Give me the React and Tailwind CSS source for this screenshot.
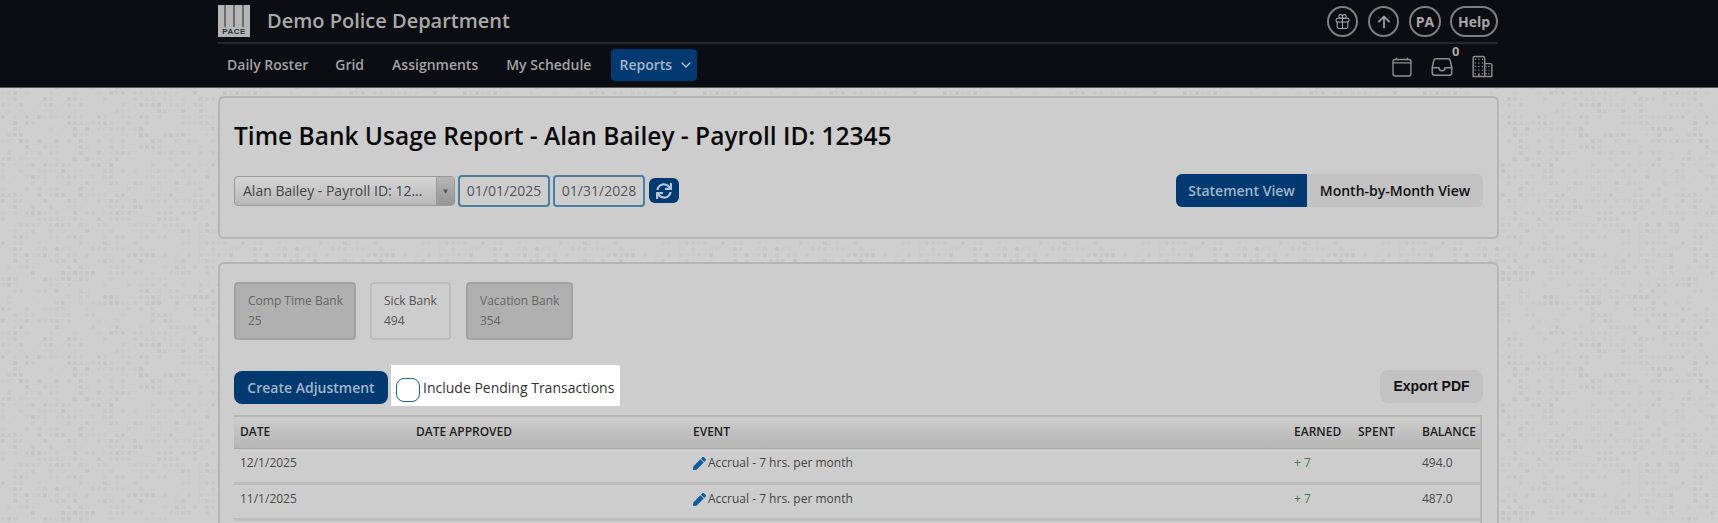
import React from "react";
import { IoGiftOutline, IoArrowUpOutline, IoCalendarClearOutline, IoFileTrayOutline, IoBusinessOutline, IoChevronDown } from "react-icons/io5";
import { FaSync, FaPen } from "react-icons/fa";

const font = "font-['Open_Sans',sans-serif]";

function makeTexture() {
  let seed = 7;
  const rnd = () => {
    seed = (seed * 16807) % 2147483647;
    return seed / 2147483647;
  };
  let rects = "";
  for (let y = 0; y < 40; y++) {
    for (let x = 0; x < 40; x++) {
      const r = rnd();
      if (r < 0.5) {
        const op = r < 0.1 ? 0.55 : r < 0.3 ? 0.35 : 0.2;
        rects += `<rect x='${x * 6 + 1}' y='${y * 6 + 1}' width='4' height='4' rx='1' fill='%23bdbdbd' opacity='${op}'/>`;
      }
    }
  }
  return `url("data:image/svg+xml,<svg xmlns='http://www.w3.org/2000/svg' width='240' height='240'>${rects}</svg>")`;
}
const texture = makeTexture();

function Logo() {
  return (
    <div className="w-8 h-8 bg-[#b5b5b5] flex flex-col justify-end relative overflow-hidden">
      <div className="flex-1 flex justify-between px-[6px]">
        <div className="w-[2px] bg-[#6c6c6c]" />
        <div className="w-[2px] bg-[#6c6c6c]" />
        <div className="w-[2px] bg-[#6c6c6c]" />
      </div>
      <div className="h-[10px] leading-[10px] text-[8px] font-bold text-[#333] text-center tracking-[0.5px] font-['Liberation_Sans',sans-serif]">PACE</div>
    </div>
  );
}

function Circle({ children, className = "" }) {
  return (
    <div className={`h-[31px] rounded-full border-2 border-[#7f7f7f] flex items-center justify-center text-[#a8a8a8] text-sm font-bold ${className}`}>
      {children}
    </div>
  );
}

function Bank({ label, value, active, className = "" }) {
  return (
    <div className={`h-[58px] rounded-[4px] border-2 pl-[12px] pt-[7px] text-[12px] leading-[20px] whitespace-nowrap ${active ? "border-[#bdbdbd] bg-[#cdcdcd] text-[#555]" : "border-[#a3a3a3] bg-[#b0b0b0] text-[#666]"} ${className}`}>
      <div>{label}</div>
      <div>{value}</div>
    </div>
  );
}

const cols = "grid grid-cols-[176px_277px_601px_64px_64px_1fr]";

function Row({ date, balance }) {
  return (
    <div className={`${cols} h-[36px] pl-[6px] pt-[5px] border-b-[3px] border-[#bdbdbd] text-[12px] leading-[18px] text-[#4a4a4a]`}>
      <div>{date}</div>
      <div />
      <div className="flex items-center gap-[2px] h-[18px]">
        <FaPen className="text-[#0d5c9e] w-[13px] h-[13px]" />
        <span className="text-[#444]">Accrual - 7 hrs. per month</span>
      </div>
      <div className="text-[#3f7d4f]">+ 7</div>
      <div />
      <div>{balance}</div>
    </div>
  );
}

export default function App() {
  return (
    <div className={`${font} h-[523px] overflow-hidden bg-[#cfcfcf]`} style={{ backgroundImage: texture }}>
      <header className="h-[88px] bg-[#0c0d12] border-b border-[#5a5a5a]">
        <div className="w-[1280px] ml-[218px]">
          <div className="h-[44px] flex items-start justify-between border-b-2 border-[#27282c] pt-[5px]">
            <div className="flex items-center">
              <Logo />
              <span className="ml-[17px] text-[20px] leading-[32px] font-semibold text-[#a9a9a9]">Demo Police Department</span>
            </div>
            <div className="flex items-center gap-[9px] pt-[1px]">
              <Circle className="w-[31px] text-[18px]"><IoGiftOutline className="w-[17px] h-[17px]" /></Circle>
              <Circle className="w-[31px] text-[18px] ml-[1px]"><IoArrowUpOutline className="w-[18px] h-[18px]" /></Circle>
              <Circle className="w-[32px] ml-[1px]">PA</Circle>
              <Circle className="w-[48px]">Help</Circle>
            </div>
          </div>
          <div className="h-[41px] flex items-center justify-between">
            <nav className="flex items-center pl-[9px] text-[14px] font-semibold text-[#a3a3a3]">
              <span>Daily Roster</span>
              <span className="ml-[27px]">Grid</span>
              <span className="ml-[28px]">Assignments</span>
              <span className="ml-[28px]">My Schedule</span>
              <span className="ml-[20px] h-[32px] w-[86px] rounded-[4px] bg-[#013a71] text-[#a3b5c7] flex items-center pl-[8px] gap-[7px]">
                Reports <IoChevronDown className="w-[14px] h-[14px] text-[#b8c5d2]" />
              </span>
            </nav>
            <div className="flex items-center gap-[17px] pr-[4px] pt-[4px] text-[#8f8f8f]">
              <IoCalendarClearOutline className="w-[22px] h-[22px]" />
              <div className="relative">
                <IoFileTrayOutline className="w-[24px] h-[24px]" />
                <span className="absolute -top-[13px] left-[22px] text-[13px] font-bold text-[#a8a8a8]">0</span>
              </div>
              <IoBusinessOutline className="w-[23px] h-[23px]" />
            </div>
          </div>
        </div>
      </header>

      <main className="w-[1281px] ml-[218px]">
        <section className="mt-[8px] h-[143px] rounded-[6px] border-2 border-[#b5b5b5] bg-[#cdcdcd] px-[14px] pt-[21px]">
          <h1 className="text-[24.5px] leading-[33px] font-semibold text-[#0a0a0a]">Time Bank Usage Report - Alan Bailey - Payroll ID: 12345</h1>
          <div className="mt-[22px] flex items-center justify-between">
            <div className="flex items-center">
              <div className="w-[221px] h-[30px] rounded-[4px] border border-[#9a9a9a] bg-gradient-to-b from-[#d6d6d6] to-[#b8b8b8] flex items-center text-[14px] text-[#444]">
                <span className="flex-1 pl-[8px] whitespace-nowrap">Alan Bailey - Payroll ID: 12...</span>
                <span className="w-[18px] h-full border-l border-[#9a9a9a] bg-gradient-to-b from-[#b5b5b5] to-[#969696] flex items-center justify-center text-[#555] text-[8px] rounded-r-[3px]">▼</span>
              </div>
              <div className="ml-[3px] w-[92px] h-[32px] rounded-[4px] border-2 border-[#4b7f9f] flex items-center justify-center text-[14px] text-[#555]">01/01/2025</div>
              <div className="ml-[3px] w-[92px] h-[32px] rounded-[4px] border-2 border-[#4b7f9f] flex items-center justify-center text-[14px] text-[#555]">01/31/2028</div>
              <div className="ml-[4px] w-[30px] h-[25px] rounded-[6px] bg-[#013a71] flex items-center justify-center">
                <FaSync className="w-[16px] h-[16px] text-[#b3c4d4]" />
              </div>
            </div>
            <div className="flex h-[33px] rounded-[6px] bg-[#c2c2c2] text-[14px] font-semibold">
              <span className="w-[131px] rounded-l-[6px] bg-[#013a71] text-[#a3b5c7] flex items-center justify-center">Statement View</span>
              <span className="w-[176px] flex items-center justify-center text-[#111]">Month-by-Month View</span>
            </div>
          </div>
        </section>

        <section className="mt-[23px] h-[300px] rounded-[6px] border-2 border-[#b5b5b5] bg-[#cdcdcd] px-[14px] pt-[18px]">
          <div className="flex">
            <Bank label="Comp Time Bank" value="25" className="w-[122px]" />
            <Bank label="Sick Bank" value="494" active className="ml-[14px] w-[81px]" />
            <Bank label="Vacation Bank" value="354" className="ml-[15px] w-[107px]" />
          </div>
          <div className="mt-[22px] h-[44px] flex items-center justify-between">
            <div className="flex items-end h-full">
              <button className="w-[154px] h-[33px] mb-[2px] rounded-[8px] bg-[#013a71] text-[#a3b5c7] text-[14px] font-semibold">Create Adjustment</button>
              <div className="ml-[3px] w-[229px] h-[41px] bg-white flex items-center pl-[5px] text-[14px] text-[#333]">
                <span className="w-[24px] h-[24px] rounded-[8px] border border-[#1a6496] bg-white mr-[3px] mt-[8px]" />
                <span className="mt-[3px]">Include Pending Transactions</span>
              </div>
            </div>
            <button className="w-[103px] h-[33px] rounded-[8px] bg-[#c2c2c2] text-[14px] font-bold text-[#111] font-['Liberation_Sans',sans-serif] mb-[-4px]">Export PDF</button>
          </div>
          <div className="mt-[9px] mr-[1px] h-[200px] border-t-2 border-r-2 border-[#b5b5b5]">
            <div className={`${cols} h-[32px] pl-[6px] pb-[2px] items-center bg-gradient-to-b from-[#cdcdcd] to-[#b5b5b5] border-b border-[#a8a8a8] text-[12px] font-semibold text-[#1e1e1e] whitespace-nowrap`}>
              <div>DATE</div>
              <div>DATE APPROVED</div>
              <div>EVENT</div>
              <div>EARNED</div>
              <div>SPENT</div>
              <div>BALANCE</div>
            </div>
            <Row date="12/1/2025" balance="494.0" />
            <Row date="11/1/2025" balance="487.0" />
          </div>
        </section>
      </main>
    </div>
  );
}
